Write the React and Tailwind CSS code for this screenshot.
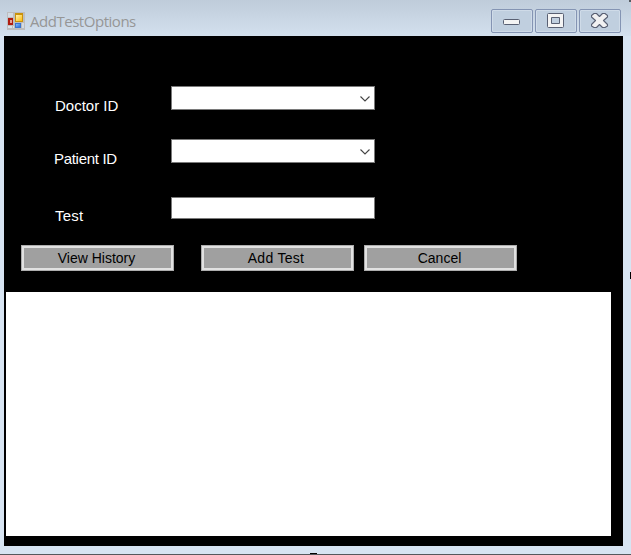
const caption =
  "flex h-6 w-[42px] items-center justify-center rounded-[2px] border border-[#8494b3] bg-[#c0cfdf] shadow-[inset_0_0_0_1px_#cfdbe8]";

function AppIcon() {
  return (
    <svg width="18" height="18" viewBox="0 0 18 18" shapeRendering="crispEdges" className="mt-3 shrink-0">
      <defs>
        <linearGradient id="gold" x1="0" y1="0" x2="1" y2="1">
          <stop offset="0" stopColor="#fff3b0" />
          <stop offset="1" stopColor="#fdbb10" />
        </linearGradient>
        <linearGradient id="blue" x1="0" y1="0" x2="1" y2="1">
          <stop offset="0" stopColor="#82b8fa" />
          <stop offset="1" stopColor="#2c6fdc" />
        </linearGradient>
      </defs>
      <rect width="18" height="18" fill="#bdbdbf" />
      <rect x="1" y="1" width="5" height="4" fill="#d3dbe4" />
      <rect x="1" y="14" width="4" height="2" fill="#dce2e8" />
      <rect x="6" y="14" width="1" height="2" fill="#dce2e8" />
      <rect x="15" y="11" width="2" height="5" fill="#d3dbe4" />
      <rect x="1" y="6" width="5" height="7" fill="#b01c10" />
      <rect x="3" y="8" width="2" height="3" fill="#e8a092" />
      <rect x="8" y="1" width="8" height="9" fill="#c9920c" />
      <rect x="9" y="3" width="6" height="6" fill="url(#gold)" />
      <rect x="8" y="11" width="6" height="5" fill="#3a74cf" />
      <rect x="9" y="12" width="4" height="3" fill="url(#blue)" />
    </svg>
  );
}

function TitleBar() {
  return (
    <header className="flex h-9 items-start bg-linear-to-b from-[#bfccda] to-[#d3e0ee] pl-[7px]">
      <AppIcon />
      <h1 className="mt-[11px] ml-[5px] w-[461px] font-['Open_Sans','Noto_Sans',sans-serif] text-[15px] leading-5 tracking-[-0.47px] text-[#969696]">
        AddTestOptions
      </h1>
      <div className="mt-[9px] flex gap-0.5">
        <button className={caption} aria-label="Minimize">
          <svg width="18" height="18" viewBox="0 0 18 18">
            <rect x="0.5" y="7.5" width="16" height="5" rx="1" fill="#f4f4f4" stroke="#596073" />
          </svg>
        </button>
        <button className={caption} aria-label="Maximize">
          <svg width="18" height="18" viewBox="0 0 18 18">
            <path d="M1.5 1.5H15.5Q16.5 1.5 16.5 2.5V14.5Q16.5 15.5 15.5 15.5H1.5Q.5 15.5 .5 14.5V2.5Q.5 1.5 1.5 1.5ZM4.5 5.5V11.5H12.5V5.5Z" fill="#f4f4f4" fillRule="evenodd" stroke="#596073" />
          </svg>
        </button>
        <button className={caption} aria-label="Close">
          <svg width="18" height="18" viewBox="0 0 18 18">
            <path d="M.5 3.5L3 1.5H5.5L8.5 4.5L11.5 1.5H14L16.5 3.5V5L12.5 8.5L16.5 12.5V14L14 15.5H11.5L8.5 12.5L5.5 15.5H3L.5 14V12.5L4.5 8.5L.5 5Z" fill="#f1f1f2" stroke="#596073" strokeWidth="1.1" strokeLinejoin="round" />
          </svg>
        </button>
      </div>
    </header>
  );
}

function Combo() {
  return (
    <button className="flex h-6 w-[204px] items-center justify-end border border-[#7a7a7a] bg-white pt-px pr-1">
      <svg width="10" height="6" viewBox="0 0 10 6">
        <path d="M.5 .5L5 5L9.5 .5" fill="none" stroke="#444" strokeWidth="1.1" />
      </svg>
    </button>
  );
}

function ActionButton({ children, className = "" }) {
  return (
    <button
      className={`flex h-[26px] w-[153px] items-center justify-center border border-[#adadad] bg-[#a0a0a0] text-sm leading-none text-black shadow-[inset_0_0_0_2px_#e1e1e1] ${className}`}
    >
      {children}
    </button>
  );
}

export default function App() {
  return (
    <div className="relative h-[555px] w-[631px] overflow-hidden border-b border-[#55585c] bg-[#d7e4f2] font-['Liberation_Sans',Arial,sans-serif]">
      <TitleBar />
      <main className="ml-1 h-[510px] w-[619px] bg-black pt-[50px]">
        <div className="flex h-6">
          <label className="w-[167px] pt-3 pl-[51px] text-[15px] leading-4 text-white">Doctor ID</label>
          <Combo />
        </div>
        <div className="mt-[29px] flex h-6">
          <label className="w-[167px] pt-3 pl-[50px] text-[15px] leading-4 tracking-[-0.3px] text-white">Patient ID</label>
          <Combo />
        </div>
        <div className="mt-[34px] flex h-[22px]">
          <label className="w-[167px] pt-[11px] pl-[51px] text-[15px] leading-4 tracking-[0.2px] text-white">Test</label>
          <input className="h-[22px] w-[204px] border border-[#7a7a7a] bg-white px-1 text-sm text-black outline-none" />
        </div>
        <div className="mt-[26px] flex pl-[17px]">
          <ActionButton className="pr-0.5">View History</ActionButton>
          <ActionButton className="ml-[27px] pr-[3px] tracking-[0.3px]">Add Test</ActionButton>
          <ActionButton className="ml-2.5 pr-0.5">Cancel</ActionButton>
        </div>
        <section className="mt-[21px] ml-0.5 h-[244px] w-[605px] bg-white" />
      </main>
      <span className="absolute top-[272px] right-0 h-[7px] w-px bg-black" />
      <span className="absolute -bottom-px left-[310px] h-0.5 w-[7px] border-x border-t border-black bg-white" />
      <span className="absolute top-0 right-0 h-0.5 w-0.5 bg-[#555a60]" />
    </div>
  );
}
